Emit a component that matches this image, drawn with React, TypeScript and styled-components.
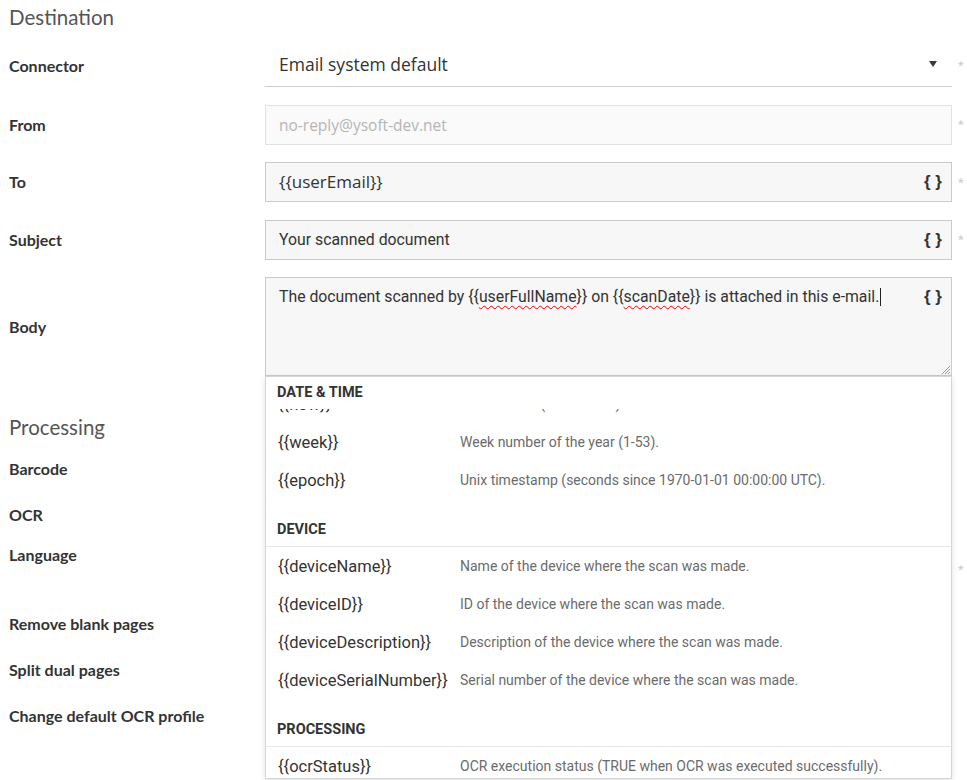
import { useLayoutEffect, useRef } from "react";
import styled, { createGlobalStyle } from "styled-components";

const GlobalStyle = createGlobalStyle`
  html {
    overflow: hidden;
  }
  html, body {
    margin: 0;
    padding: 0;
    background: #fff;
  }
  body {
    font-family: "Roboto", "Liberation Sans", sans-serif;
    color: #333;
  }
`;

type Placeholder = { key: string; desc: string };
type Group = { title: string; items: Placeholder[] };

const groups: Group[] = [
  {
    title: "DATE & TIME",
    items: [
      { key: "{{scanDate}}", desc: "Date when the document was scanned." },
      { key: "{{scanTime}}", desc: "Time when the document was scanned." },
      { key: "{{now}}", desc: "Current time (date + time)." },
      { key: "{{week}}", desc: "Week number of the year (1-53)." },
      { key: "{{epoch}}", desc: "Unix timestamp (seconds since 1970-01-01 00:00:00 UTC)." },
    ],
  },
  {
    title: "DEVICE",
    items: [
      { key: "{{deviceName}}", desc: "Name of the device where the scan was made." },
      { key: "{{deviceID}}", desc: "ID of the device where the scan was made." },
      { key: "{{deviceDescription}}", desc: "Description of the device where the scan was made." },
      { key: "{{deviceSerialNumber}}", desc: "Serial number of the device where the scan was made." },
    ],
  },
  {
    title: "PROCESSING",
    items: [
      { key: "{{ocrStatus}}", desc: "OCR execution status (TRUE when OCR was executed successfully)." },
      { key: "{{pageCount}}", desc: "Number of pages in the scanned document." },
    ],
  },
];

const PlaceholderMenu = () => {
  const listRef = useRef<HTMLDivElement>(null);

  useLayoutEffect(() => {
    if (listRef.current) listRef.current.scrollTop = 101;
  }, []);

  return (
    <Menu>
      <MenuScroll ref={listRef}>
        {groups.map((g) => (
          <MenuGroup key={g.title}>
            <GroupTitle>{g.title}</GroupTitle>
            <GroupList>
              {g.items.map((it) => (
                <MenuItem key={it.key}>
                  <ItemKey>{it.key}</ItemKey>
                  <ItemDesc>{it.desc}</ItemDesc>
                </MenuItem>
              ))}
            </GroupList>
          </MenuGroup>
        ))}
      </MenuScroll>
    </Menu>
  );
};

const SwitchField = () => (
  <SwitchCell>
    <Toggle />
  </SwitchCell>
);

export default function App() {
  return (
    <Page>
      <GlobalStyle />

      <Section>
        <SectionTitle>Destination</SectionTitle>
        <Rows $gap={17.5}>
          <Row>
            <Label>Connector</Label>
            <Select>
              <span>Email system default</span>
              <Caret />
            </Select>
            <Required>*</Required>
          </Row>
          <Row>
            <Label>From</Label>
            <Input $disabled>no-reply@ysoft-dev.net</Input>
            <Required>*</Required>
          </Row>
          <Row>
            <Label>To</Label>
            <Input>
              <InputText>{"{{userEmail}}"}</InputText>
              <Braces>{"{ }"}</Braces>
            </Input>
            <Required>*</Required>
          </Row>
          <Row>
            <Label>Subject</Label>
            <Input>
              <EditorText>Your scanned document</EditorText>
              <Braces>{"{ }"}</Braces>
            </Input>
            <Required>*</Required>
          </Row>
          <Row>
            <Label>Body</Label>
            <FieldCell>
              <TextArea>
                <EditorText>
                  The document scanned by {"{{"}
                  <Misspelled>userFullName</Misspelled>
                  {"}}"} on {"{{"}
                  <Misspelled>scanDate</Misspelled>
                  {"}}"} is attached in this e-mail.
                  <Cursor />
                </EditorText>
                <Braces>{"{ }"}</Braces>
                <Grip width="9" height="9" viewBox="0 0 9 9">
                  <path d="M9 1L1 9M9 4L4 9M9 7L7 9" stroke="#999" strokeWidth="1" />
                </Grip>
              </TextArea>
              <PlaceholderMenu />
            </FieldCell>
            <span />
          </Row>
        </Rows>
      </Section>

      <Section>
        <SectionTitle>Processing</SectionTitle>
        <Rows $gap={16}>
          <Row>
            <Label>Barcode</Label>
            <SwitchField />
            <span />
          </Row>
          <Row>
            <Label>OCR</Label>
            <SwitchField />
            <span />
          </Row>
          <Row>
            <Label $top>Language</Label>
            <Box />
            <Required>*</Required>
          </Row>
          <Row>
            <Label>Remove blank pages</Label>
            <SwitchField />
            <span />
          </Row>
          <Row>
            <Label>Split dual pages</Label>
            <SwitchField />
            <span />
          </Row>
          <Row>
            <Label>Change default OCR profile</Label>
            <SwitchField />
            <span />
          </Row>
        </Rows>
      </Section>
    </Page>
  );
}

const Page = styled.div`
  padding: 5px 0 0 9px;
  width: 958px;
  min-height: 780px;
  box-sizing: content-box;
`;

const Section = styled.section`
  & + & {
    margin-top: 39px;
  }
`;

const SectionTitle = styled.h2`
  margin: 0 0 15px;
  font-family: "Lato", "Liberation Sans", sans-serif;
  font-weight: 400;
  font-size: 20.5px;
  line-height: 24px;
  color: #555;
`;

const Rows = styled.div<{ $gap: number }>`
  display: flex;
  flex-direction: column;
  gap: ${(p) => p.$gap}px;
`;

const Row = styled.div`
  display: grid;
  grid-template-columns: 256px 687px 15px;
  align-items: center;
`;

const Label = styled.label<{ $top?: boolean }>`
  align-self: ${(p) => (p.$top ? "start" : "center")};
  font-family: "Lato", "Liberation Sans", sans-serif;
  font-weight: 700;
  font-size: 16px;
  line-height: 18px;
  color: #333;
`;

const Required = styled.span`
  align-self: center;
  padding-left: 6px;
  font-size: 13px;
  line-height: 13px;
  color: #ccc;
`;

const Select = styled.div`
  height: 43px;
  box-sizing: border-box;
  border-bottom: 1px solid #ccc;
  display: flex;
  align-items: center;
  justify-content: space-between;
  padding: 0 14px 2px;
  font-family: "Open Sans", "Liberation Sans", sans-serif;
  font-size: 17.5px;
  color: #333;
`;

const Caret = styled.span`
  width: 0;
  height: 0;
  margin-right: 1px;
  border-left: 4px solid transparent;
  border-right: 4px solid transparent;
  border-top: 6px solid #3a3a3a;
`;

const Input = styled.div<{ $disabled?: boolean }>`
  height: 40px;
  box-sizing: border-box;
  display: flex;
  align-items: center;
  padding: 0 9px 0 13px;
  border: 1px solid ${(p) => (p.$disabled ? "#e2e2e2" : "#cbcbcb")};
  background: ${(p) => (p.$disabled ? "#fafafa" : "#f7f7f7")};
  font-family: "Open Sans", "Liberation Sans", sans-serif;
  font-size: 15.5px;
  color: ${(p) => (p.$disabled ? "#b5b5b5" : "#333")};
`;

const InputText = styled.span`
  flex: 1;
  font-family: "Open Sans", "Liberation Sans", sans-serif;
  font-size: 17px;
  line-height: 20px;
  color: #333;
`;

const EditorText = styled.span`
  flex: 1;
  font-family: "Roboto", "Liberation Sans", sans-serif;
  font-size: 15.8px;
  line-height: 18px;
  color: #333;
`;

const Braces = styled.span`
  font-family: "Liberation Sans", sans-serif;
  font-weight: 700;
  font-size: 17px;
  line-height: 18px;
  color: #333;
`;

const FieldCell = styled.div`
  position: relative;
`;

const TextArea = styled.div`
  position: relative;
  height: 99px;
  box-sizing: border-box;
  display: flex;
  align-items: flex-start;
  padding: 10px 9px 0 13px;
  border: 1px solid #cbcbcb;
  background: #f7f7f7;
`;

const Misspelled = styled.span`
  text-decoration: underline wavy #e00;
  text-decoration-thickness: 1px;
  text-underline-offset: 3px;
`;

const Cursor = styled.span`
  display: inline-block;
  width: 1px;
  height: 18px;
  margin-left: 1px;
  vertical-align: -4px;
  background: #222;
`;

const Grip = styled.svg`
  position: absolute;
  right: 1px;
  bottom: 1px;
`;

const Menu = styled.div`
  position: absolute;
  top: 100%;
  left: 0;
  right: 0;
  height: 403px;
  box-sizing: border-box;
  border: 1px solid #d6d6d6;
  background: #fff;
  box-shadow: 0 2px 6px rgba(0, 0, 0, 0.12);
  z-index: 10;
`;

const MenuScroll = styled.div`
  height: 100%;
  overflow-y: auto;
  scrollbar-width: none;
  &::-webkit-scrollbar {
    display: none;
  }
`;

const MenuGroup = styled.div`
  padding-bottom: 15px;
`;

const GroupTitle = styled.div`
  position: sticky;
  top: 0;
  z-index: 1;
  background: #fff;
  padding: 7px 11px 7px;
  font-weight: 700;
  font-size: 14.5px;
  line-height: 18px;
  color: #333;
`;

const GroupList = styled.div`
  border-top: 1px solid #e6e6e6;
`;

const MenuItem = styled.div`
  height: 38px;
  display: grid;
  grid-template-columns: 182px 1fr;
  align-items: center;
  padding: 0 12px;
`;

const ItemKey = styled.span`
  font-size: 16.5px;
  color: #333;
`;

const ItemDesc = styled.span`
  font-size: 14px;
  color: #6b6b6b;
`;

const SwitchCell = styled.div`
  height: 30px;
  display: flex;
  align-items: center;
`;

const Toggle = styled.span`
  width: 40px;
  height: 22px;
  border-radius: 11px;
  background: #ccc;
`;

const Box = styled.div`
  height: 47px;
  box-sizing: border-box;
  border: 1px solid #cbcbcb;
  background: #f7f7f7;
`;
